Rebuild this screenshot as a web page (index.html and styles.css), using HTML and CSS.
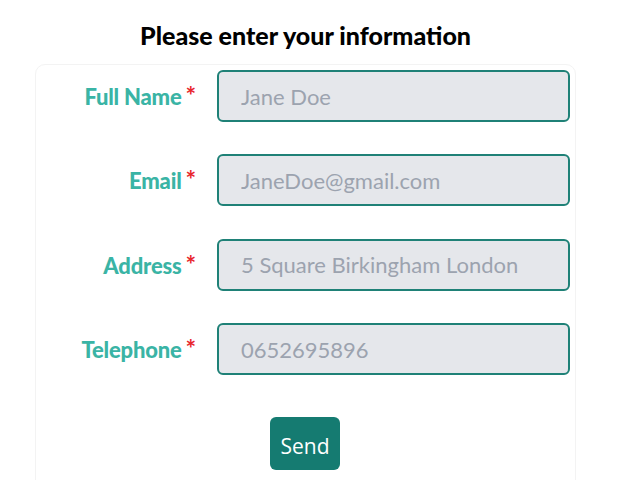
FILE: index.html
```html
<!DOCTYPE html>
<html lang="en">
<head>
<meta charset="utf-8">
<title>Form</title>
<link rel="stylesheet" href="styles.css">
</head>
<body>
<div class="page">
  <h1 class="title">Please enter your information</h1>
  <form class="card">
    <div class="grid">
      <label class="label" for="name">Full Name<span class="req">*</span></label>
      <input class="field" id="name" type="text" placeholder="Jane Doe">
      <label class="label" for="email">Email<span class="req">*</span></label>
      <input class="field" id="email" type="text" placeholder="JaneDoe@gmail.com">
      <label class="label" for="addr">Address<span class="req">*</span></label>
      <input class="field" id="addr" type="text" placeholder="5 Square Birkingham London">
      <label class="label" for="tel">Telephone<span class="req">*</span></label>
      <input class="field" id="tel" type="text" placeholder="0652695896">
    </div>
    <div class="actions">
      <button class="send" type="button">Send</button>
    </div>
  </form>
</div>
</body>
</html>
```
FILE: styles.css
```css
html, body {
  margin: 0;
  padding: 0;
  background: #ffffff;
}
body {
  font-family: Lato, "Liberation Sans", sans-serif;
  overflow: hidden;
  height: 480px;
}
.page {
  display: flex;
  flex-direction: column;
  align-items: flex-start;
  padding-left: 35px;
}
.title {
  width: 541px;
  text-align: center;
  font-size: 25px;
  font-weight: 900;
  color: #000000;
  margin: 20px 0 14px 0;
  line-height: 30px;
}
.card {
  box-sizing: border-box;
  width: 541px;
  height: 440px;
  border: 1px solid #f3f3f3;
  border-radius: 10px;
  padding: 5px 5px 0 0;
}
.grid {
  display: grid;
  grid-template-columns: 160px 353px;
  column-gap: 21px;
  row-gap: 32.4px;
  align-items: center;
}
.label {
  text-align: right;
  font-size: 22px;
  font-weight: 900;
  color: #3ab4a5;
  letter-spacing: -0.2px;
  line-height: 28px;
}
.req {
  color: #e8262c;
  font-size: 25px;
  font-weight: 700;
  margin-left: 4px;
}
.field {
  box-sizing: border-box;
  height: 52px;
  width: 353px;
  border: 2px solid #1f8177;
  border-radius: 6px;
  background: #e5e7eb;
  padding: 0 22px;
  font-family: Lato, "Liberation Sans", sans-serif;
  font-size: 22px;
  color: #374151;
  outline: none;
}
.field::placeholder {
  color: #9ca3af;
}
.actions {
  display: flex;
  justify-content: center;
  margin-top: 42px;
  padding-left: 4px;
}
.send {
  width: 70px;
  height: 53px;
  border: none;
  border-radius: 6px;
  background: #157b71;
  color: #ffffff;
  font-family: "Open Sans", "Liberation Sans", sans-serif;
  font-size: 21px;
  padding: 4px 0 0 0;
}
```
